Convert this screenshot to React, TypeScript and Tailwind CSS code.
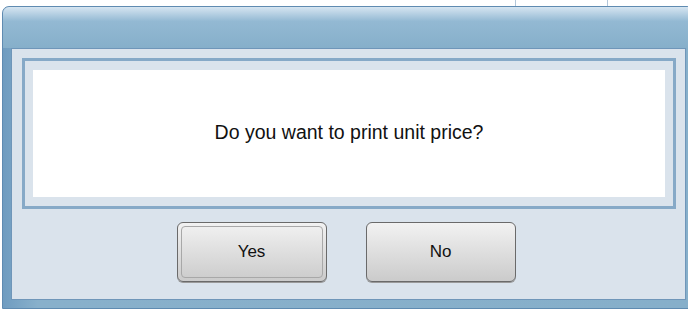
export default function App() {
  return (
    <div className="w-[688px] h-[311px] overflow-hidden bg-white font-['Liberation_Sans',Arial,sans-serif]">
      {/* bits of the window behind */}
      <div className="flex h-[6px] pl-[515px]">
        <div className="w-px bg-[#b3c7da]" />
        <div className="ml-[91px] w-px bg-[#b3c7da]" />
      </div>

      <div className="ml-[2px] flex h-[303px] w-[692px] flex-col rounded-t-[7px] border border-[#5f8bb1] bg-gradient-to-r from-[#6f9cc0] via-[#88b0cb] via-5% to-[#86afca]">
        <div className="h-[41px] rounded-t-[6px] bg-gradient-to-b from-[#d6e5f1] via-[#93b9d3] via-35% to-[#86afca]" />

        <div className="mb-[8px] ml-[8px] mr-[7px] flex flex-1 flex-col border border-[#6f96b9] bg-[#dae3ec] pl-[10px] pr-[9px] pt-[9px]">
          <div className="border-[3px] border-[#86a9c7] px-[8px] py-[9px]">
            <div className="flex h-[127px] items-center justify-center bg-white">
              <p className="pb-[2px] text-[19.5px] text-[#111]">Do you want to print unit price?</p>
            </div>
          </div>

          <div className="mt-[13px] flex justify-center gap-[39px] pr-[6px]">
            <button className="h-[60px] w-[150px] rounded-[6px] border border-[#6a6a6a] bg-gradient-to-b from-[#f2f2f2] to-[#cbcbcb] p-[3px] shadow-[0_1px_0_#9a9a9a]">
              <div className="flex h-full w-full items-center justify-center rounded-[4px] border border-[#a8a8a8] text-[17px] text-[#111]">
                Yes
              </div>
            </button>
            <button className="flex h-[60px] w-[150px] items-center justify-center rounded-[6px] border border-[#6a6a6a] bg-gradient-to-b from-[#f2f2f2] to-[#cbcbcb] text-[17px] text-[#111] shadow-[0_1px_0_#9a9a9a]">
              No
            </button>
          </div>
        </div>
      </div>
    </div>
  );
}
